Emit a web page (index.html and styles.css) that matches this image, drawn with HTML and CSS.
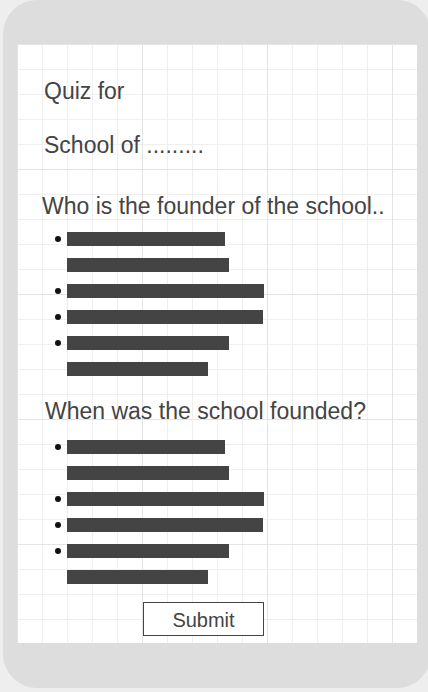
FILE: index.html
```html
<!DOCTYPE html>
<html>
<head>
<meta charset="utf-8">
<link rel="stylesheet" href="styles.css">
</head>
<body>
<div class="phone">
  <div class="screen">
    <p class="title">Quiz for</p>
    <p class="subtitle">School of .........</p>
    <p class="question q1">Who is the founder of the school..</p>
    <ul class="answers">
      <li><div class="bars"><span class="bar" style="width:158px"></span><span class="bar" style="width:162px"></span></div></li>
      <li><div class="bars"><span class="bar" style="width:197px"></span></div></li>
      <li><div class="bars"><span class="bar" style="width:196px"></span></div></li>
      <li><div class="bars"><span class="bar" style="width:162px"></span><span class="bar" style="width:141px"></span></div></li>
    </ul>
    <p class="question q2">When was the school founded?</p>
    <ul class="answers">
      <li><div class="bars"><span class="bar" style="width:158px"></span><span class="bar" style="width:162px"></span></div></li>
      <li><div class="bars"><span class="bar" style="width:197px"></span></div></li>
      <li><div class="bars"><span class="bar" style="width:196px"></span></div></li>
      <li><div class="bars"><span class="bar" style="width:162px"></span><span class="bar" style="width:141px"></span></div></li>
    </ul>
    <button class="submit" type="button">Submit</button>
  </div>
</div>
</body>
</html>
```
FILE: styles.css
```css
html, body {
  margin: 0;
  padding: 0;
  background: #eeeeee;
  overflow: hidden;
}
body {
  font-family: "Liberation Sans", Arial, sans-serif;
  color: #444444;
}
.phone {
  box-sizing: border-box;
  width: 428px;
  height: 688px;
  margin-left: 3px;
  background: #dddddd;
  border-radius: 34px;
  padding: 44px 14px 45px 14px;
}
.screen {
  box-sizing: border-box;
  width: 400px;
  height: 599px;
  background-color: #ffffff;
  background-image:
    linear-gradient(to right, #e4e4e4 1px, transparent 1px),
    linear-gradient(to bottom, #e4e4e4 1px, transparent 1px),
    linear-gradient(to right, #efefef 1px, transparent 1px),
    linear-gradient(to bottom, #efefef 1px, transparent 1px);
  background-size: 125px 125px, 125px 125px, 25px 25px, 25px 25px;
  padding-top: 34px;
  display: flex;
  flex-direction: column;
  align-items: flex-start;
}
p {
  margin: 0;
  font-size: 23px;
  line-height: 26px;
}
.title {
  margin-left: 27px;
}
.subtitle {
  margin-left: 27px;
  margin-top: 28px;
}
.q1 {
  margin-left: 25px;
  margin-top: 35px;
}
.q2 {
  margin-left: 28px;
  margin-top: 16px;
}
.answers {
  list-style: none;
  margin: 7px 0 0 0;
  padding: 0 0 0 38px;
  display: flex;
  flex-direction: column;
}
.q2 + .answers {
  margin-top: 10px;
}
.answers li {
  display: flex;
  align-items: flex-start;
}
.answers li::before {
  content: "";
  width: 6px;
  height: 6px;
  border-radius: 50%;
  background: #111111;
  margin-top: 10px;
  margin-right: 6px;
  flex: none;
}
.bars {
  display: flex;
  flex-direction: column;
  gap: 12px;
  padding: 6px 0;
}
.bar {
  display: block;
  height: 14px;
  background: #444444;
}
.submit {
  margin-top: 12px;
  margin-left: 126px;
  box-sizing: border-box;
  width: 121px;
  height: 34px;
  padding: 2px 0 0 0;
  background: #ffffff;
  border: 1px solid #444444;
  border-radius: 0;
  font-family: "Liberation Sans", Arial, sans-serif;
  font-size: 20px;
  color: #444444;
}
```
